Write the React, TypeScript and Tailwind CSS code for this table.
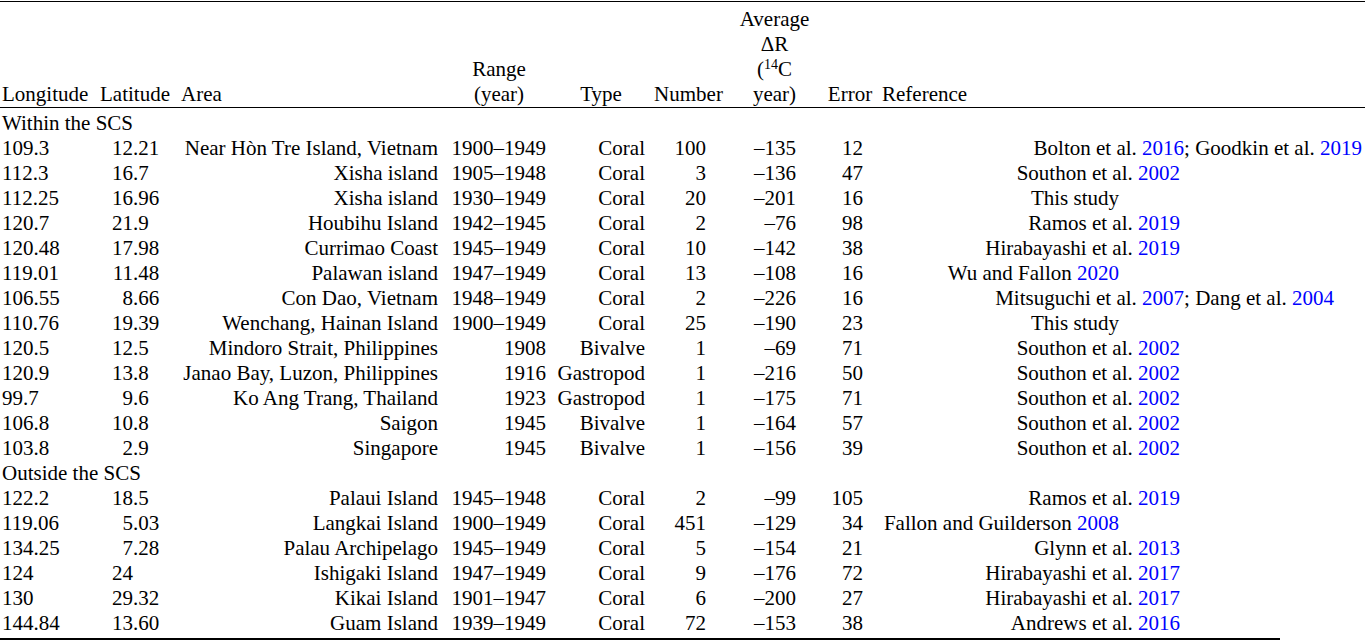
const grid = "grid grid-cols-[96px_74px_276px_106px_98px_77px_95px_56px_1fr]"

type Row = [string, string, string, string, string, string, string, string, string, number]

// ref text: years in [brackets] render as blue links; last item = right edge of the reference
const within: Row[] = [
  ["109.3", "12.21", "Near Hòn Tre Island, Vietnam", "1900–1949", "Coral", "100", "–135", "12", "Bolton et al. [2016]; Goodkin et al. [2019]", 1],
  ["112.3", "16.7", "Xisha island", "1905–1948", "Coral", "3", "–136", "47", "Southon et al. [2002]", 2],
  ["112.25", "16.96", "Xisha island", "1930–1949", "Coral", "20", "–201", "16", "This study", 3],
  ["120.7", "21.9", "Houbihu Island", "1942–1945", "Coral", "2", "–76", "98", "Ramos et al. [2019]", 2],
  ["120.48", "17.98", "Currimao Coast", "1945–1949", "Coral", "10", "–142", "38", "Hirabayashi et al. [2019]", 2],
  ["119.01", "11.48", "Palawan island", "1947–1949", "Coral", "13", "–108", "16", "Wu and Fallon [2020]", 3],
  ["106.55", "8.66", "Con Dao, Vietnam", "1948–1949", "Coral", "2", "–226", "16", "Mitsuguchi et al. [2007]; Dang et al. [2004]", 4],
  ["110.76", "19.39", "Wenchang, Hainan Island", "1900–1949", "Coral", "25", "–190", "23", "This study", 3],
  ["120.5", "12.5", "Mindoro Strait, Philippines", "1908", "Bivalve", "1", "–69", "71", "Southon et al. [2002]", 2],
  ["120.9", "13.8", "Janao Bay, Luzon, Philippines", "1916", "Gastropod", "1", "–216", "50", "Southon et al. [2002]", 2],
  ["99.7", "9.6", "Ko Ang Trang, Thailand", "1923", "Gastropod", "1", "–175", "71", "Southon et al. [2002]", 2],
  ["106.8", "10.8", "Saigon", "1945", "Bivalve", "1", "–164", "57", "Southon et al. [2002]", 2],
  ["103.8", "2.9", "Singapore", "1945", "Bivalve", "1", "–156", "39", "Southon et al. [2002]", 2],
]

const outside: Row[] = [
  ["122.2", "18.5", "Palaui Island", "1945–1948", "Coral", "2", "–99", "105", "Ramos et al. [2019]", 2],
  ["119.06", "5.03", "Langkai Island", "1900–1949", "Coral", "451", "–129", "34", "Fallon and Guilderson [2008]", 3],
  ["134.25", "7.28", "Palau Archipelago", "1945–1949", "Coral", "5", "–154", "21", "Glynn et al. [2013]", 2],
  ["124", "24", "Ishigaki Island", "1947–1949", "Coral", "9", "–176", "72", "Hirabayashi et al. [2017]", 2],
  ["130", "29.32", "Kikai Island", "1901–1947", "Coral", "6", "–200", "27", "Hirabayashi et al. [2017]", 2],
  ["144.84", "13.60", "Guam Island", "1939–1949", "Coral", "72", "–153", "38", "Andrews et al. [2016]", 2],
]

const refWidth: Record<number, string> = {
  1: "w-[484px]",
  2: "w-[302px]",
  3: "w-[241px]",
  4: "w-[456px]",
}

function RefText({ text }: { text: string }) {
  const parts = text.split(/\[(\d+)\]/)
  return (
    <>
      {parts.map((p, i) =>
        i % 2 === 1 ? (
          <span key={i} className="text-[#0000ff]">
            {p}
          </span>
        ) : (
          <span key={i}>{p}</span>
        )
      )}
    </>
  )
}

function DataRow({ row }: { row: Row }) {
  const [lon, lat, area, range, type, num, dr, err, ref, edge] = row
  const dot = lat.indexOf(".")
  const latInt = dot < 0 ? lat : lat.slice(0, dot)
  const latFrac = dot < 0 ? "" : lat.slice(dot)
  return (
    <div className={`${grid} h-[25px] whitespace-nowrap`}>
      <div className="pl-[2px]">{lon}</div>
      <div className="flex">
        <span className="w-[37px] text-right">{latInt}</span>
        <span>{latFrac}</span>
      </div>
      <div className="pr-[8px] text-right">{area}</div>
      <div className="pr-[6px] text-right">{range}</div>
      <div className="pr-[5px] text-right">{type}</div>
      <div className="pr-[21px] text-right">{num}</div>
      <div className="pr-[26px] text-right">{dr}</div>
      <div className="pr-[15px] text-right">{err}</div>
      <div className={`${refWidth[edge]} text-right`}>
        <RefText text={ref} />
      </div>
    </div>
  )
}

export default function App() {
  return (
    <div className="h-[644px] w-[1365px] overflow-hidden bg-white font-['Liberation_Serif','Times_New_Roman',serif] text-[21px] leading-[25px] text-black">
      <div className="mt-[1px] h-px bg-black" />

      <div className={`${grid} h-[105px] items-end whitespace-nowrap`}>
        <div className="pl-[2px]">Longitude</div>
        <div className="pl-[4px]">Latitude</div>
        <div className="pl-[11px]">Area</div>
        <div className="text-center">
          <div>Range</div>
          <div>(year)</div>
        </div>
        <div className="text-center">Type</div>
        <div className="text-center">Number</div>
        <div className="text-center">
          <div>Average</div>
          <div>ΔR</div>
          <div>
            (<sup className="text-[14px]">14</sup>C
          </div>
          <div>year)</div>
        </div>
        <div className="text-center">Error</div>
        <div className="pl-[4px]">Reference</div>
      </div>

      <div className="h-px bg-black" />

      <div className="pt-[3px]">
        <div className="h-[25px] pl-[2px]">Within the SCS</div>
        {within.map((r, i) => (
          <DataRow key={i} row={r} />
        ))}
        <div className="h-[25px] pl-[2px]">Outside the SCS</div>
        {outside.map((r, i) => (
          <DataRow key={i} row={r} />
        ))}
      </div>

      <div className="mt-[2px] h-[2px] w-[1280px] bg-black" />
    </div>
  )
}
